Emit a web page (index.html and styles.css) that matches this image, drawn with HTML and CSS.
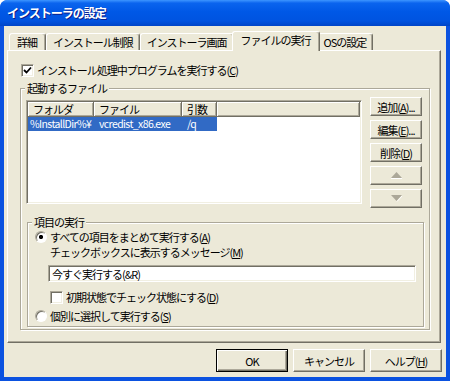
FILE: index.html
```html
<!DOCTYPE html>
<html lang="ja">
<head>
  <meta charset="UTF-8" />
  <title>インストーラの設定</title>
  <link rel="stylesheet" href="styles.css">
</head>
<body>
  <div class="window">
    <div class="titlebar">インストーラの設定</div>
    <div class="client">
      <div class="tabs">
        <div class="tab">詳細</div>
        <div class="tab">インストール制限</div>
        <div class="tab">インストーラ画面</div>
        <div class="tab active">ファイルの実行</div>
        <div class="tab">OSの設定</div>
      </div>

      <div class="panel">
        <label class="check-row top-check">
          <span class="checkbox"><svg width="9" height="9" viewBox="0 0 9 9"><path d="M1 4 L3.5 6.5 L8 1.5" fill="none" stroke="#000" stroke-width="1.8"/></svg></span>
          <span>インストール処理中プログラムを実行する(<u>C</u>)</span>
        </label>

        <div class="group files-group">
          <span class="group-title">起動するファイル</span>
          <div class="files">
            <div class="listview">
              <div class="lv-header">
                <div class="hcol c1">フォルダ</div>
                <div class="hcol c2">ファイル</div>
                <div class="hcol c3">引数</div>
                <div class="hcol c4"></div>
              </div>
              <div class="lv-row selected">
                <div class="cell c1">%InstallDir%¥</div>
                <div class="cell c2">vcredist_x86.exe</div>
                <div class="cell c3">/q</div>
              </div>
            </div>
            <div class="side-buttons">
              <button class="btn">追加(<u>A</u>)...</button>
              <button class="btn">編集(<u>E</u>)...</button>
              <button class="btn">削除(<u>D</u>)</button>
              <button class="btn" disabled><svg width="11" height="7" viewBox="0 0 11 7"><path d="M5.5 0 L11 6 L0 6 Z" fill="#aca899"/><path d="M0 6.5 H11" stroke="#fff"/></svg></button>
              <button class="btn" disabled><svg width="11" height="7" viewBox="0 0 11 7"><path d="M0 0 L11 0 L5.5 6 Z" fill="#aca899"/><path d="M6 6.5 L11.5 0.5" stroke="#fff"/></svg></button>
            </div>
          </div>

          <div class="group run-group">
            <span class="group-title">項目の実行</span>
            <label class="radio-row"><span class="radio on"></span>すべての項目をまとめて実行する(<u>A</u>)</label>
            <div class="msg-label">チェックボックスに表示するメッセージ(<u>M</u>)</div>
            <input class="textbox" value="今すぐ実行する(&amp;R)" />
            <label class="check-row sub-check"><span class="checkbox"></span><span>初期状態でチェック状態にする(<u>D</u>)</span></label>
            <label class="radio-row last"><span class="radio"></span>個別に選択して実行する(<u>S</u>)</label>
          </div>
        </div>
      </div>

      <div class="footer">
        <button class="btn big default">OK</button>
        <button class="btn big">キャンセル</button>
        <button class="btn big">ヘルプ(<u>H</u>)</button>
      </div>
    </div>
  </div>
</body>
</html>
```

FILE: styles.css
```css
* { box-sizing: border-box; }
body {
  margin: 0;
  background: #fff;
  font: 11px/16px "Noto Sans CJK JP", sans-serif;
  letter-spacing: -1px;
  color: #000;
}
u { text-decoration: underline; text-underline-offset: 1px; }

.window {
  width: 450px;
  height: 381px;
  background: #0b52e0;
  border-radius: 8px 8px 0 0;
  display: flex;
  flex-direction: column;
}
.titlebar {
  height: 26px;
  padding-left: 7px;
  border-radius: 7px 7px 0 0;
  background: linear-gradient(#3d95ff 0%, #0a64ee 12%, #0058e6 45%, #0053e0 80%, #0045c8 100%);
  color: #fff;
  font-weight: bold;
  font-size: 12px;
  line-height: 26px;
  text-shadow: 1px 1px #0a1e8c;
}
.client {
  flex: 1;
  margin: 0 4px 4px;
  padding: 5px 4px 0 3px;
  background: #ece9d8;
  display: flex;
  flex-direction: column;
}

/* tabs */
.tabs {
  display: flex;
  align-items: flex-end;
  height: 19px;
  padding-left: 2px;
}
.tab {
  height: 17px;
  padding: 0 6px;
  line-height: 16px;
  border-top: 1px solid #fff;
  border-left: 1px solid #fff;
  border-right: 1px solid #716f64;
  box-shadow: inset -1px 0 #aca899;
  border-radius: 3px 3px 0 0;
  white-space: nowrap;
}
.tab:first-child { padding: 0 8px 0 7px; }
.tab.active {
  height: 20px;
  margin: 0 -2px -1px;
  padding: 0 8px;
  line-height: 17px;
  background: #ece9d8;
  position: relative;
  z-index: 1;
}
.tab.active + .tab { border-left: none; }

.panel {
  width: 434px;
  height: 293px;
  border: 1px solid;
  border-color: #fff #716f64 #716f64 #fff;
  box-shadow: inset -1px -1px #aca899;
}

/* checkbox / radio */
.check-row, .radio-row {
  display: flex;
  align-items: center;
  height: 16px;
  white-space: nowrap;
}
.checkbox {
  width: 13px;
  height: 13px;
  margin-right: 3px;
  background: #fff;
  border: 1px solid;
  border-color: #aca899 #fff #fff #aca899;
  box-shadow: inset 1px 1px #716f64, inset -1px -1px #f1efe2;
  display: flex;
  align-items: center;
  justify-content: center;
  flex: none;
}
.radio {
  width: 12px;
  height: 12px;
  margin-right: 3px;
  border-radius: 50%;
  background: #fff;
  border: 1px solid;
  border-color: #aca899 #fff #fff #aca899;
  box-shadow: inset 1px 1px #716f64;
  flex: none;
}
.radio.on { background: radial-gradient(circle, #000 0, #000 1.8px, #fff 2.4px); }

.top-check { margin: 11px 0 0 13px; }

/* group boxes */
.group {
  position: relative;
  border: 1px solid #aca899;
  box-shadow: inset 1px 1px #fff, 1px 1px #fff;
}
.group-title {
  position: absolute;
  top: -9px;
  left: 4px;
  padding: 0 2px;
  background: #ece9d8;
  line-height: 16px;
}
.files-group {
  width: 410px;
  height: 242px;
  margin: 10px 0 0 12px;
  padding: 11px 6px 0 5px;
}
.files {
  display: flex;
  align-items: flex-start;
  gap: 8px;
}

/* list view */
.listview {
  width: 336px;
  height: 104px;
  background: #fff;
  border: 1px solid;
  border-color: #aca899 #fff #fff #aca899;
  box-shadow: inset 1px 1px #716f64, inset -1px -1px #f1efe2;
  padding: 1px;
}
.lv-header { display: flex; height: 15px; }
.hcol {
  height: 15px;
  line-height: 14px;
  padding-left: 5px;
  background: #ece9d8;
  border-right: 1px solid #716f64;
  border-bottom: 1px solid #716f64;
  box-shadow: inset 1px 1px #fff, inset -1px -1px #aca899;
  white-space: nowrap;
}
.c1 { width: 66px; }
.c2 { width: 88px; }
.c3 { width: 35px; }
.c4 { flex: 1; }
.lv-row { display: flex; height: 14px; line-height: 14px; }
.lv-row.selected { width: 189px; background: #316ac5; color: #fff; }
.cell {
  padding-left: 5px;
  font-size: 10.5px;
  letter-spacing: -0.6px;
  white-space: nowrap;
  overflow: hidden;
}
.cell.c1 { padding-left: 2px; }

/* buttons */
.side-buttons {
  display: flex;
  flex-direction: column;
  gap: 4px;
  margin-top: -3px;
}
.btn {
  width: 52px;
  height: 19px;
  padding: 0;
  font: inherit;
  letter-spacing: inherit;
  color: #000;
  background: #ece9d8;
  border: 1px solid;
  border-color: #fff #716f64 #716f64 #fff;
  box-shadow: inset -1px -1px #aca899;
  display: flex;
  align-items: center;
  justify-content: center;
  white-space: nowrap;
}
.btn.big { width: 72px; height: 23px; }
.btn.default {
  border-color: #000;
  box-shadow: inset 1px 1px #fff, inset -1px -1px #716f64, inset -2px -2px #aca899;
}

.run-group {
  width: 397px;
  height: 105px;
  margin-top: 14px;
  margin-left: 1px;
  padding: 6px 0 0 7px;
}
.run-group .radio-row { height: 15px; }
.msg-label { height: 16px; padding-left: 15px; line-height: 16px; white-space: nowrap; }
.textbox {
  display: block;
  width: 368px;
  height: 17px;
  margin: 5px 0 0 13px;
  padding: 0 3px;
  font: inherit;
  letter-spacing: inherit;
  line-height: 13px;
  background: #fff;
  border: 1px solid;
  border-color: #aca899 #fff #fff #aca899;
  box-shadow: inset 1px 1px #716f64, inset -1px -1px #f1efe2;
  outline: none;
}
.sub-check { margin: 7px 0 0 15px; }
.radio-row.last { height: 16px; margin-top: 3px; }

.footer {
  display: flex;
  justify-content: flex-end;
  gap: 5px;
  margin-top: 6px;
}
```
